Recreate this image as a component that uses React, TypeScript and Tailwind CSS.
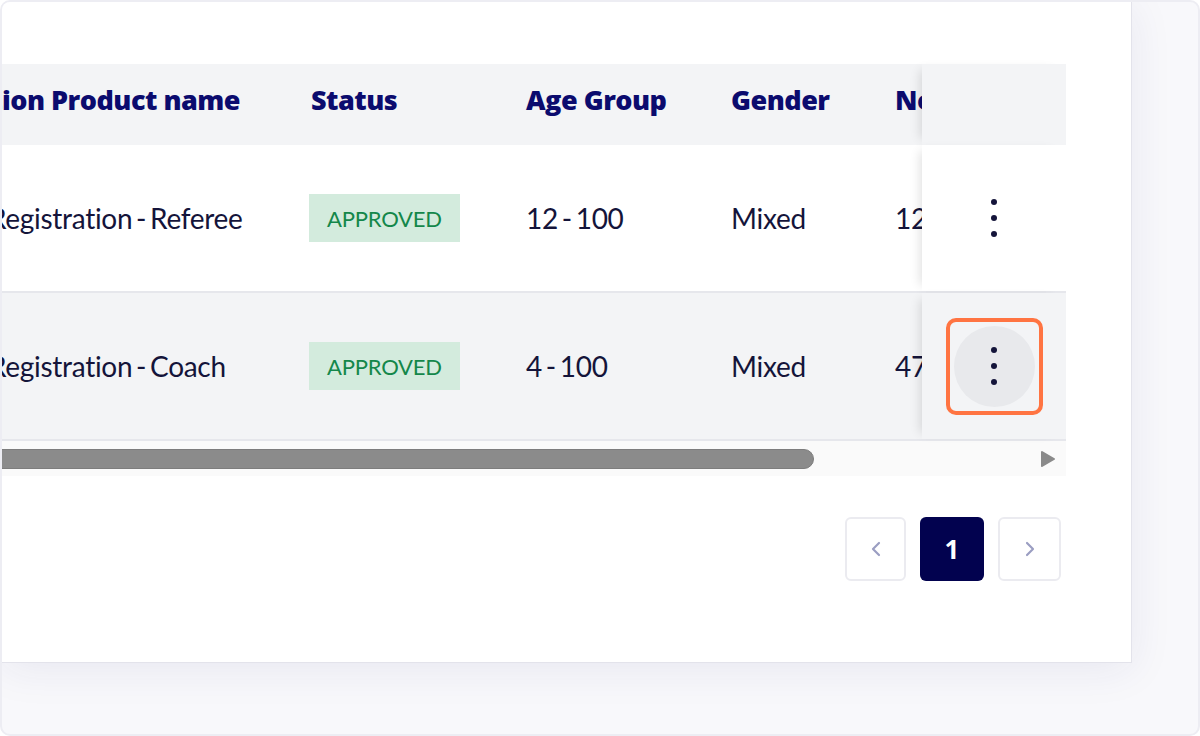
import { ChevronLeft, ChevronRight } from 'lucide-react'

const rows = [
  { product: 'Registration - Referee', status: 'APPROVED', age: '12 - 100', gender: 'Mixed', num: '12', bg: 'bg-white', active: false },
  { product: 'Registration - Coach', status: 'APPROVED', age: '4 - 100', gender: 'Mixed', num: '47', bg: 'bg-[#f3f4f6]', active: true },
]

function Kebab() {
  return (
    <svg width="8" height="40" viewBox="0 0 8 40" className="text-[#14143a]">
      <circle cx="4" cy="4" r="3" fill="currentColor" />
      <circle cx="4" cy="20" r="3" fill="currentColor" />
      <circle cx="4" cy="36" r="3" fill="currentColor" />
    </svg>
  )
}

export default function App() {
  return (
    <div className="w-[1200px] h-[736px] bg-[#f8f8fb] border-2 border-[#ededf3] rounded-[10px] overflow-hidden font-['Lato',sans-serif]">
      <div className="w-[1130px] h-[661px] bg-white border-r border-b border-[#e3e3eb] shadow-[0_6px_40px_rgba(40,40,110,0.08)] pt-[62px]">
        <div className="w-[1064px]">
          {/* header */}
          <div className="flex h-[81px] bg-[#f3f4f6]">
            <div className="flex-1 overflow-hidden">
              <div className="flex h-full items-center pb-[8px] whitespace-nowrap font-['Open_Sans',sans-serif] font-extrabold text-[27px] tracking-[-0.5px] text-[#0b0b6e]">
                <div className="w-[293px] shrink-0 flex justify-end pr-[55px] overflow-hidden">Registration Product name</div>
                <div className="w-[215px] shrink-0 pl-[16px]">Status</div>
                <div className="w-[205px] shrink-0 pl-[16px]">Age Group</div>
                <div className="w-[164px] shrink-0 pl-[16px]">Gender</div>
                <div className="w-[200px] shrink-0 pl-[16px]">No. of Participants</div>
              </div>
            </div>
            <div className="w-[144px] shrink-0 bg-[#f3f4f6] shadow-[-8px_0_10px_-6px_rgba(0,0,0,0.12)]" />
          </div>

          {/* body rows */}
          {rows.map((row) => (
            <div key={row.product} className={`flex h-[148px] border-b-2 border-[#e6e7ec] ${row.bg}`}>
              <div className="flex-1 overflow-hidden">
                <div className="flex h-full items-center whitespace-nowrap text-[28px] tracking-[-0.3px] [word-spacing:-3px] text-[#14143a]">
                  <div className="w-[293px] shrink-0 overflow-hidden">
                    <span className="block ml-[-13px]">{row.product}</span>
                  </div>
                  <div className="w-[215px] shrink-0 pl-[14px]">
                    <span className="inline-flex items-center h-[48px] px-[18px] bg-[#d3ebdd] text-[#14874a] text-[22px] tracking-[-0.2px] [word-spacing:0px]">
                      {row.status}
                    </span>
                  </div>
                  <div className="w-[205px] shrink-0 pl-[16px]">{row.age}</div>
                  <div className="w-[164px] shrink-0 pl-[16px]">{row.gender}</div>
                  <div className="w-[200px] shrink-0 pl-[16px]">{row.num}</div>
                </div>
              </div>
              <div className={`w-[144px] shrink-0 flex items-center justify-center ${row.bg} shadow-[-8px_0_10px_-6px_rgba(0,0,0,0.12)]`}>
                {row.active ? (
                  <div className="w-[97px] h-[97px] rounded-[10px] border-4 border-[#ff7442] flex items-center justify-center">
                    <div className="w-[81px] h-[81px] rounded-full bg-[#e8e9ec] flex items-center justify-center">
                      <Kebab />
                    </div>
                  </div>
                ) : (
                  <Kebab />
                )}
              </div>
            </div>
          ))}

          {/* horizontal scrollbar */}
          <div className="flex items-center h-[35px] bg-[#fafafa]">
            <div className="flex-1 pr-[226px]">
              <div className="h-[20px] bg-[#8b8b8b] border border-[#7d7d7d] rounded-r-full ml-[-10px]" />
            </div>
            <svg width="16" height="18" viewBox="0 0 16 18" className="mr-[10px]">
              <path d="M2 2 L14 9 L2 16 Z" fill="#8a8a8a" stroke="#8a8a8a" strokeWidth="2" strokeLinejoin="round" />
            </svg>
          </div>

          {/* pagination */}
          <div className="flex justify-end gap-[14px] mt-[41px] pr-[5px]">
            <button className="w-[61px] h-[64px] border-2 border-[#ebebf0] rounded-[6px] flex items-center justify-center text-[#9b9ec2]">
              <ChevronLeft size={24} strokeWidth={2.2} />
            </button>
            <button className="w-[64px] h-[64px] bg-[#02024f] rounded-[6px] flex items-center justify-center text-white font-['Open_Sans',sans-serif] font-bold text-[26px]">
              1
            </button>
            <button className="w-[63px] h-[64px] border-2 border-[#ebebf0] rounded-[6px] flex items-center justify-center text-[#9b9ec2]">
              <ChevronRight size={24} strokeWidth={2.2} />
            </button>
          </div>
        </div>
      </div>
    </div>
  )
}
